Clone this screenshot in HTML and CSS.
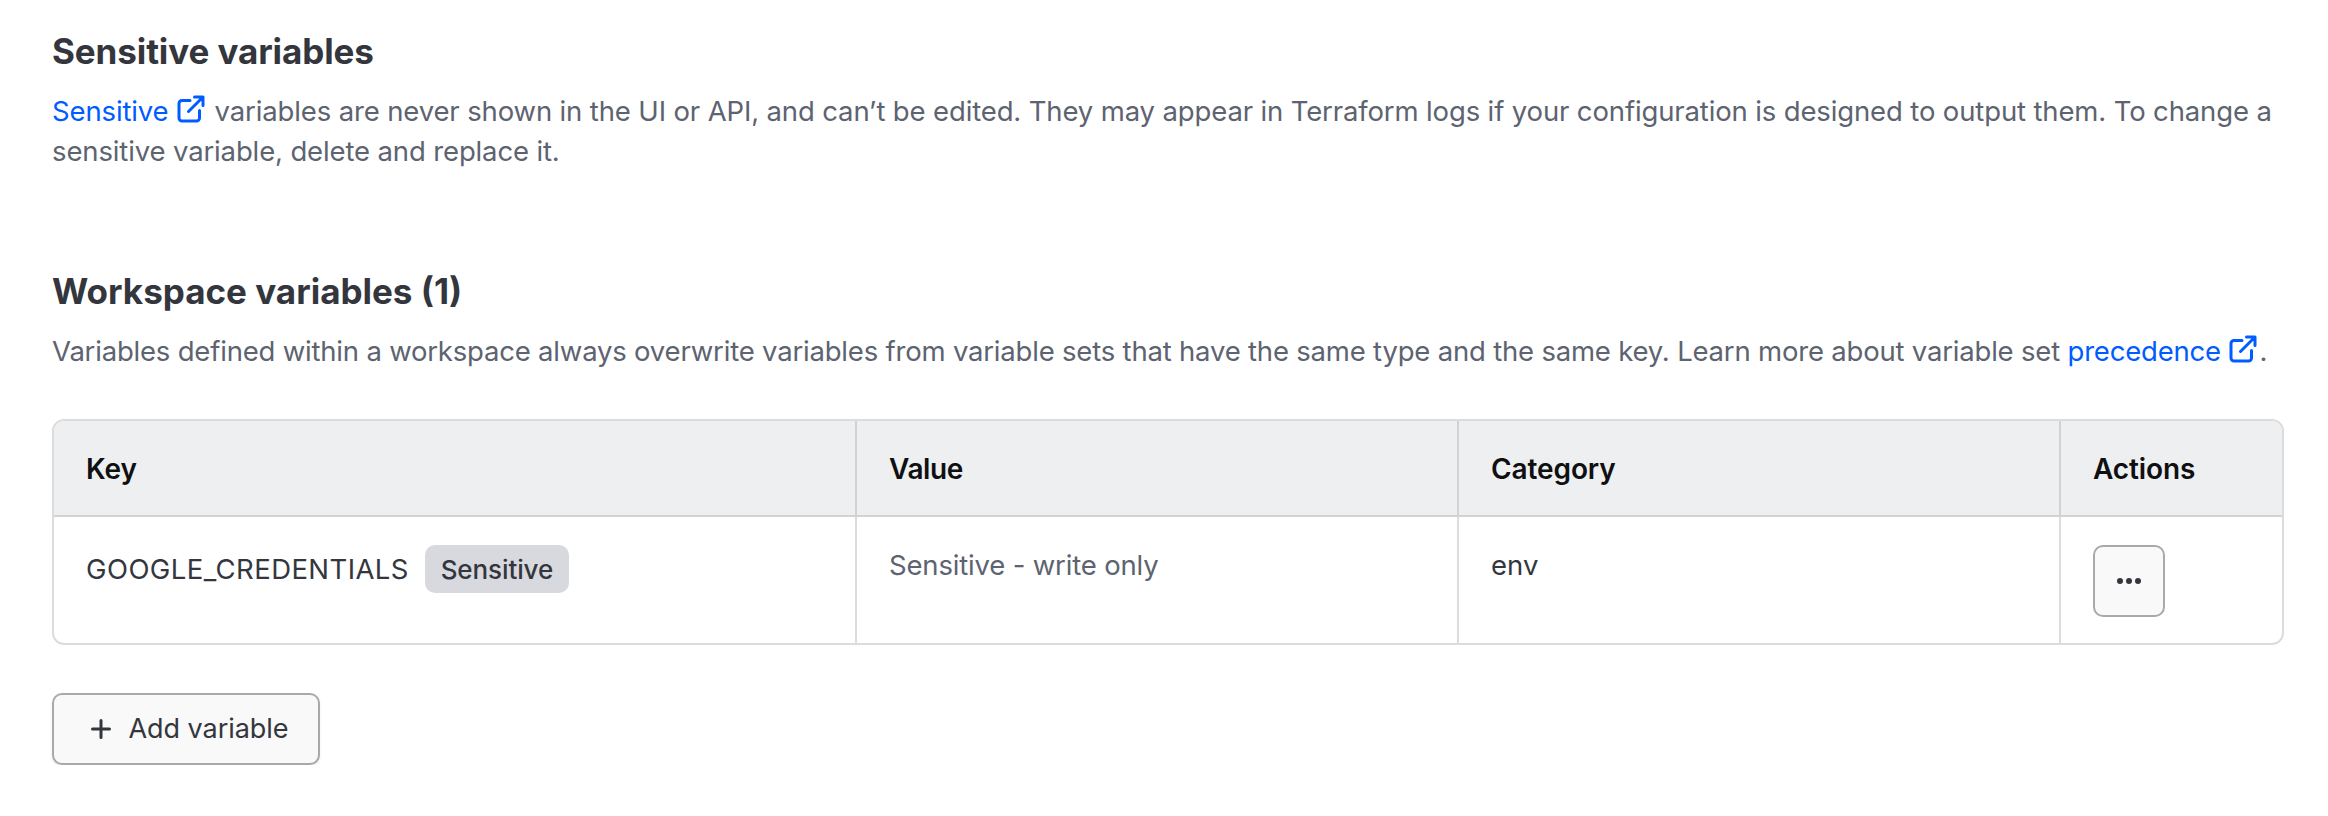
FILE: index.html
```html
<!DOCTYPE html>
<html lang="en">
<head>
<meta charset="utf-8">
<title>Variables</title>
<link rel="stylesheet" href="styles.css">
</head>
<body>
<main class="page">
  <section class="intro">
    <h2 class="title title-sensitive">Sensitive variables</h2>
    <p class="copy"><a class="link" href="#">Sensitive<svg class="ext" viewBox="0 0 28 28"><path d="M13 5.500H5a3 3 0 0 0-3 3V23a3 3 0 0 0 3 3h14.500a3 3 0 0 0 3-3v-7.500M17.500 2h8.500v8.500M25.500 2.500L11.500 16.500"/></svg></a> variables are never shown in the UI or API, and can’t be edited. They may appear in Terraform logs if your configuration is designed to output them. To change a<br>sensitive variable, delete and replace it.</p>
  </section>
  <section class="workspace">
    <h2 class="title title-workspace">Workspace variables (1)</h2>
    <p class="copy copy-workspace">Variables defined within a workspace always overwrite variables from variable sets that have the same type and the same key. Learn more about variable set <a class="link" href="#">precedence<svg class="ext" viewBox="0 0 28 28"><path d="M13 5.500H5a3 3 0 0 0-3 3V23a3 3 0 0 0 3 3h14.500a3 3 0 0 0 3-3v-7.500M17.500 2h8.500v8.500M25.500 2.500L11.500 16.500"/></svg></a>.</p>
    <div class="table">
      <div class="row head">
        <div class="cell">Key</div>
        <div class="cell value-head">Value</div>
        <div class="cell">Category</div>
        <div class="cell">Actions</div>
      </div>
      <div class="row body">
        <div class="cell key"><span class="name">GOOGLE_CREDENTIALS</span><span class="badge">Sensitive</span></div>
        <div class="cell muted">Sensitive - write only</div>
        <div class="cell">env</div>
        <div class="cell"><button class="more" aria-label="Actions"><svg width="28" height="8" viewBox="0 0 28 8"><circle cx="5" cy="4" r="3"/><circle cx="14" cy="4" r="3"/><circle cx="23" cy="4" r="3"/></svg></button></div>
      </div>
    </div>
    <button class="add"><svg width="20" height="20" viewBox="0 0 20 20"><path d="M10 1.500v17M1.500 10h17"/></svg><span>Add variable</span></button>
  </section>
</main>
</body>
</html>
```
FILE: styles.css
```css
* { box-sizing: border-box; }
body { margin: 0; background: #fff; color: #34363e; font-family: Inter, "Liberation Sans", sans-serif; font-size: 27.5px; line-height: 40px; }
.page { padding: 29px 44px 0 52px; }
.title { margin: 0; font-size: 35px; line-height: 44px; font-weight: 700; }
.title-sensitive { letter-spacing: -0.1px; }
.title-workspace { letter-spacing: 0; }
.copy { margin: 18px 0 0; color: #5d6370; white-space: nowrap; letter-spacing: -0.137px; }
.copy-workspace { letter-spacing: -0.197px; }
.link { color: #005cff; text-decoration: none; }
.ext { width: 28px; height: 28px; margin: 0 2px 0 8.5px; vertical-align: -2px; fill: none; stroke: currentColor; stroke-width: 3; stroke-linejoin: round; stroke-linecap: round; }
.workspace { padding-top: 98px; }
.table { width: 2232px; margin-top: 48px; border: 2px solid #dcdcdd; border-radius: 12px; overflow: hidden; }
.row { display: grid; grid-template-columns: 801px 602px 602px 1fr; }
.cell { padding: 28px 32px 0; border-left: 2px solid #dcdcdd; }
.cell:first-child { border-left: 0; }
.head { height: 96px; background: #eeeff1; color: #0f1012; font-size: 28px; font-weight: 600; letter-spacing: -0.1px; border-bottom: 2px solid #d1d2d4; }
.head .cell { border-color: #d1d2d4; }
.head .value-head { letter-spacing: -0.4px; }
.body { height: 126px; }
.muted { color: #5d6370; letter-spacing: -0.17px; }
.key { display: flex; align-items: flex-start; gap: 16px; }
.name { line-height: 48px; letter-spacing: 0.42px; }
.badge { height: 48px; width: 144px; text-align: center; line-height: 50px; border-radius: 10px; background: #d8d9de; font-size: 26px; font-weight: 500; letter-spacing: -0.1px; }
button { font: inherit; color: inherit; background: #f9f9f9; border: 2px solid #a9a9aa; border-radius: 10px; padding: 0; display: flex; align-items: center; }
.more { width: 72px; height: 72px; justify-content: center; fill: #34363e; }
.add { width: 268px; height: 72px; margin-top: 48px; padding-left: 36.5px; gap: 18px; font-size: 27px; letter-spacing: -0.05px; box-shadow: 0 2px 3px rgba(0,0,0,.07); }
.add svg { fill: none; stroke: #34363e; stroke-width: 3; stroke-linecap: round; }
```
